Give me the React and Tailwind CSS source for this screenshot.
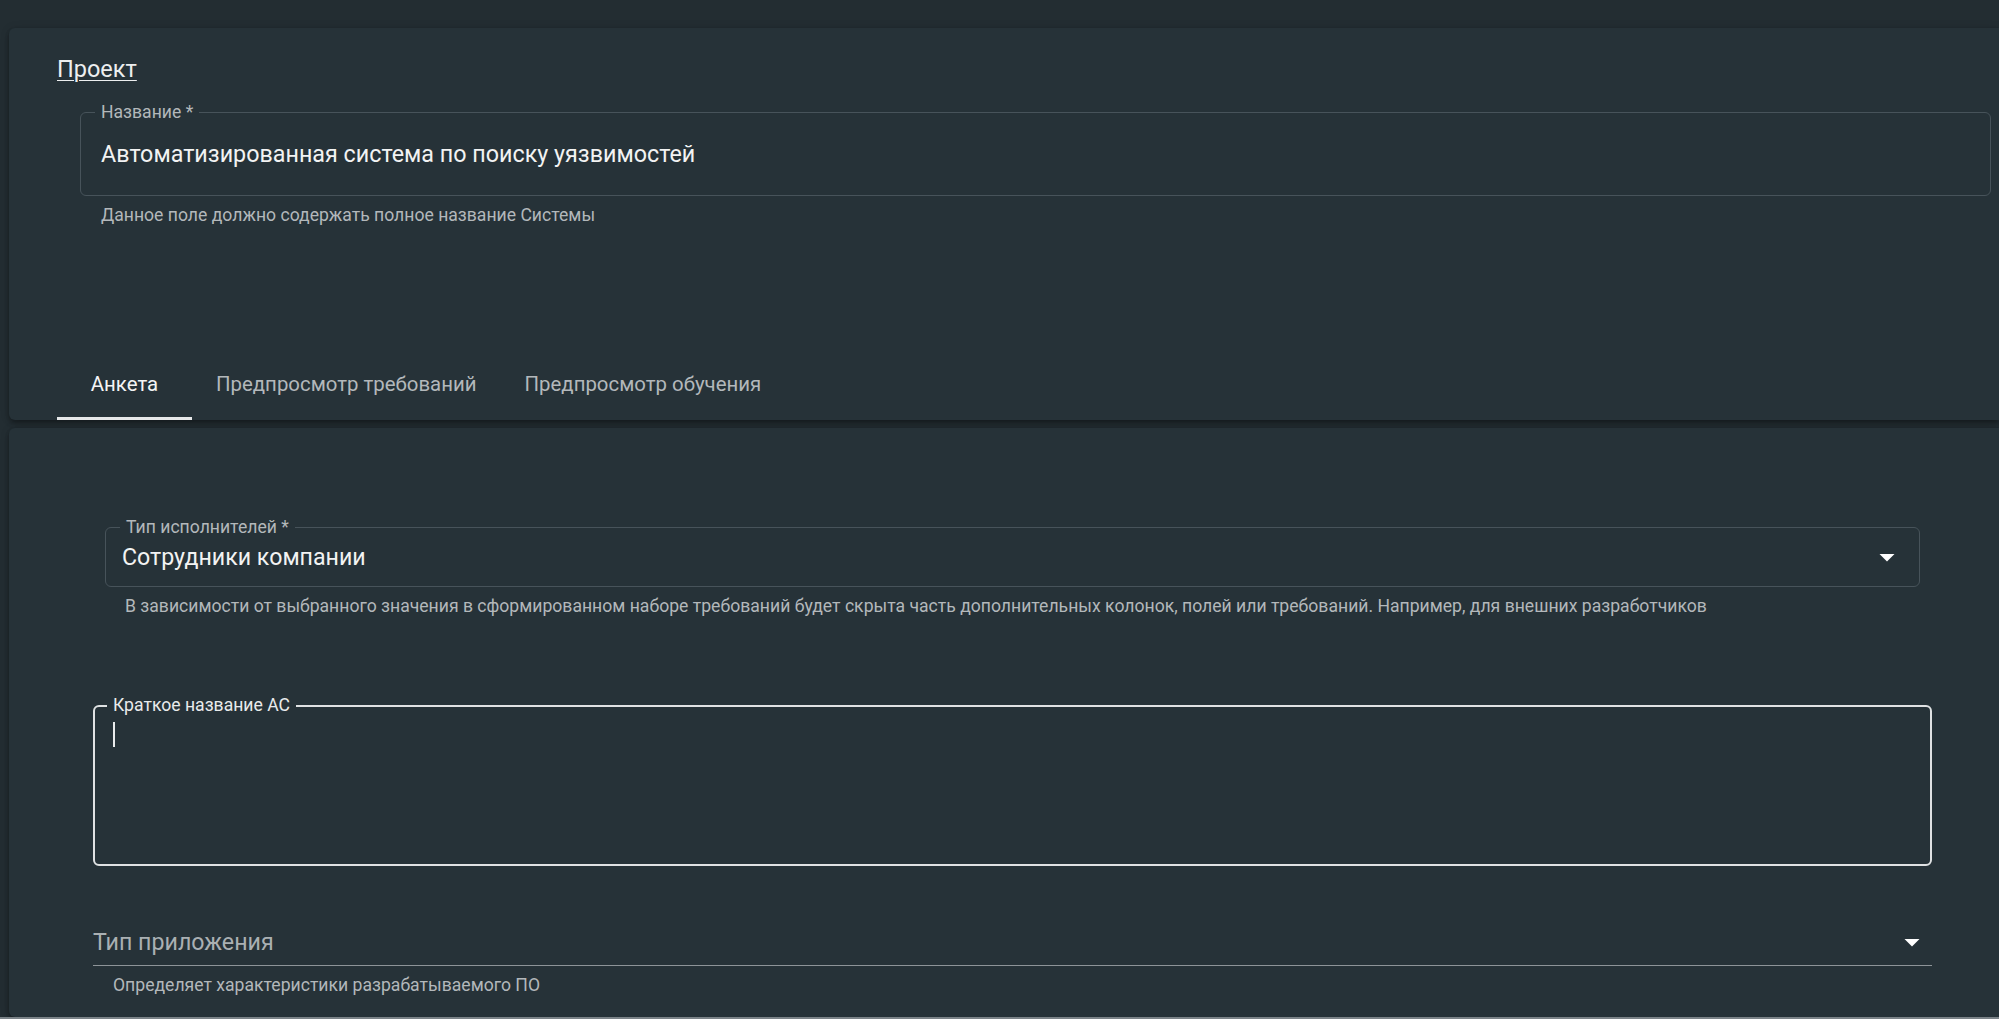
const ArrowDrop = ({ className }) => (
  <svg viewBox="0 0 24 24" className={className} fill="currentColor">
    <path d="M7 10l5 5 5-5z" />
  </svg>
);

const cardShadow =
  "shadow-[0_2px_4px_-1px_rgba(0,0,0,0.25),0_4px_5px_0_rgba(0,0,0,0.16),0_1px_10px_0_rgba(0,0,0,0.14)]";

const tabs = ["Анкета", "Предпросмотр требований", "Предпросмотр обучения"];

export default function App() {
  return (
    <div
      className="h-[1019px] w-full overflow-hidden bg-[#232d32] flex flex-col text-[#f2f3f3]"
      style={{ fontFamily: "Roboto, 'Liberation Sans', sans-serif" }}
    >
      {/* project card */}
      <div className={`mt-[28px] ml-[9px] h-[392px] bg-[#263238] rounded-l-[6px] flex flex-col ${cardShadow}`}>
        <div className="pl-[48px] pt-[23px]">
          <a className="text-[23.5px] leading-[36px] underline underline-offset-[3px] decoration-1 text-[#eceeef]">
            Проект
          </a>
        </div>

        <div className="ml-[71px] mr-[8px] mt-[25px]">
          <div className="relative h-[84px] border border-[#47535a] rounded-[6px] flex items-center pl-[20px]">
            <span className="absolute left-[14px] -top-[12px] px-[6px] bg-[#263238] text-[17.6px] leading-[22px] text-[#b3b8bb]">
              Название *
            </span>
            <span className="text-[23.3px] leading-[36px]">Автоматизированная система по поиску уязвимостей</span>
          </div>
          <p className="pl-[21px] mt-[4px] text-[17.6px] leading-[30px] text-[#b3b8bb]">
            Данное поле должно содержать полное название Системы
          </p>
        </div>

        <div className="flex-1" />

        <div className="flex h-[72px] pl-[48px]">
          {tabs.map((t, i) => (
            <div
              key={t}
              className={`min-w-[135px] px-[24px] flex items-center justify-center text-[20.4px] font-normal relative ${
                i === 0 ? "text-[#f4f5f5]" : "text-[#b3b8bb]"
              }`}
            >
              {t}
              {i === 0 && <span className="absolute left-0 right-0 bottom-0 h-[3px] bg-[#e6e8e9]" />}
            </div>
          ))}
        </div>
      </div>

      {/* form card */}
      <div className={`mt-[8px] ml-[9px] flex-1 bg-[#263238] rounded-l-[6px] ${cardShadow}`}>
        <div className="ml-[96px] mr-[79px] mt-[99px]">
          <div className="relative h-[60px] border border-[#47535a] rounded-[6px] flex items-center justify-between pl-[16px] pr-[14px]">
            <span className="absolute left-[14px] -top-[12px] px-[6px] bg-[#263238] text-[17.6px] leading-[22px] text-[#b3b8bb]">
              Тип исполнителей *
            </span>
            <span className="text-[23.2px] leading-[36px]">Сотрудники компании</span>
            <ArrowDrop className="w-[36px] h-[36px] text-white" />
          </div>
          <p className="pl-[20px] mt-[4px] text-[17.6px] leading-[30px] text-[#b3b8bb]">
            В зависимости от выбранного значения в сформированном наборе требований будет скрыта часть дополнительных колонок, полей или требований. Например, для внешних разработчиков
          </p>
        </div>

        <div className="ml-[84px] mr-[67px] mt-[84px]">
          <div className="relative h-[161px] border-2 border-[#dfe2e3] rounded-[6px] pl-[18px] pt-[15px]">
            <span className="absolute left-[12px] -top-[13px] px-[6px] bg-[#263238] text-[17.6px] leading-[22px] text-[#e9ebec]">
              Краткое название АС
            </span>
            <div className="w-[2px] h-[25px] bg-[#e9ebec]" />
          </div>

          <div className="mt-[58px] flex items-center justify-between border-b border-[#8d9498] pb-[5px] pr-[2px]">
            <span className="text-[23.2px] leading-[36px] text-[#aab0b3]">Тип приложения</span>
            <ArrowDrop className="w-[36px] h-[36px] text-white" />
          </div>
          <p className="pl-[20px] mt-[4px] text-[17.6px] leading-[30px] text-[#b3b8bb]">
            Определяет характеристики разрабатываемого ПО
          </p>
        </div>
      </div>

      <div className="h-[2px] bg-[#7b8388] shrink-0" />
    </div>
  );
}
